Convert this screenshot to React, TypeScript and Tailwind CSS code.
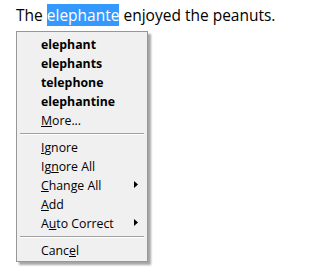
import type { ReactNode } from "react";

type Item = {
  label: ReactNode;
  bold?: boolean;
  arrow?: boolean;
};

const suggestions: Item[] = [
  { label: "elephant", bold: true },
  { label: "elephants", bold: true },
  { label: "telephone", bold: true },
  { label: "elephantine", bold: true },
  {
    label: (
      <>
        <u>M</u>ore...
      </>
    ),
  },
];

const actions: Item[] = [
  {
    label: (
      <>
        <u>I</u>gnore
      </>
    ),
  },
  {
    label: (
      <>
        Ig<u>n</u>ore All
      </>
    ),
  },
  {
    label: (
      <>
        <u>C</u>hange All
      </>
    ),
    arrow: true,
  },
  {
    label: (
      <>
        <u>A</u>dd
      </>
    ),
  },
  {
    label: (
      <>
        A<u>u</u>to Correct
      </>
    ),
    arrow: true,
  },
];

function MenuRow({ item }: { item: Item }) {
  return (
    <div className="relative flex h-[19px] items-center pl-[24px]">
      <span className={item.bold ? "font-bold" : ""}>{item.label}</span>
      {item.arrow && (
        <svg
          className="absolute left-[117px] top-[5px]"
          width="4"
          height="7"
          viewBox="0 0 4 7"
        >
          <path d="M0 0 L4 3.5 L0 7 Z" fill="#000" />
        </svg>
      )}
    </div>
  );
}

function Separator() {
  return (
    <div className="flex h-[8px] items-start pt-[3px]">
      <div className="mx-[3px] h-[2px] w-full border-t border-[#a0a0a0] bg-white" />
    </div>
  );
}

export default function App() {
  return (
    <div
      className="h-[280px] w-[285px] bg-white"
      style={{ fontFamily: '"Open Sans", "Noto Sans", sans-serif' }}
    >
      <div className="flex h-[22px] items-center whitespace-pre pl-[16px] mt-[4px] text-[15.5px] leading-[22px] text-black">
        <span>The </span>
        <span className="inline-block h-[22px] bg-[#3399ff] text-white">elephante</span>
        <span> enjoyed the peanuts.</span>
      </div>

      <div className="ml-[16px] mt-[5px] w-[132px] border border-[#979797] bg-[#f0f0f0] py-[3px] pb-[1px] text-[12.3px] leading-[19px] text-black shadow-[3px_3px_2px_rgba(0,0,0,0.35)]">
        {suggestions.map((item, i) => (
          <MenuRow key={i} item={item} />
        ))}
        <Separator />
        {actions.map((item, i) => (
          <MenuRow key={i} item={item} />
        ))}
        <Separator />
        <MenuRow
          item={{
            label: (
              <>
                Canc<u>e</u>l
              </>
            ),
          }}
        />
      </div>
    </div>
  );
}
